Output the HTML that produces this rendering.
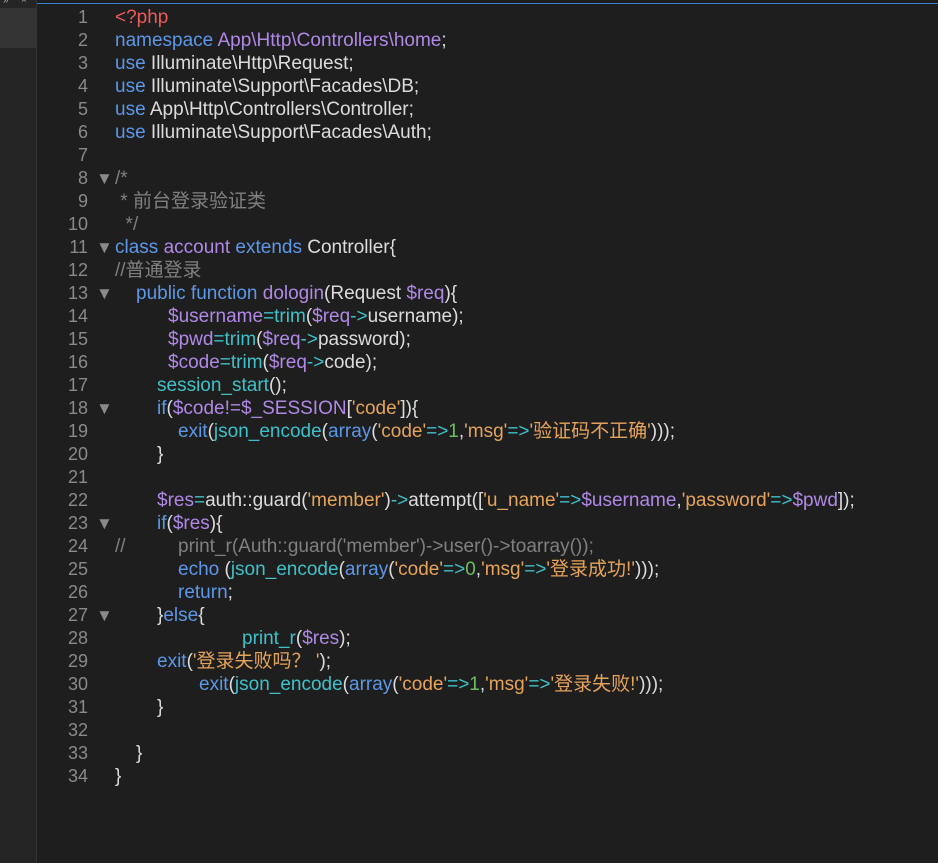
<!DOCTYPE html>
<html><head><meta charset="utf-8"><style>
body{margin:0;width:938px;height:863px;background:#1e1e1e;overflow:hidden;position:relative;font-family:"Liberation Sans","Noto Sans CJK SC",sans-serif;font-size:19px;color:#dcdcdc}
#side{position:absolute;left:0;top:0;width:36px;height:863px;background:#252526;border-right:1px solid #333}
#side .tab{position:absolute;left:0;top:8px;width:36px;height:40px;background:#333}
#topline{position:absolute;left:37px;top:3px;width:901px;height:1px;background:#3b7dd0}
.l{position:absolute;white-space:pre;height:23px;line-height:23px}
.n{position:absolute;width:60px;left:28px;text-align:right;color:#8a8a8a;line-height:23px;font-size:18px}
.f{position:absolute;left:96px;color:#8a8a8a;font-size:17px;line-height:23px}
.k{color:#5c98e8}.p{color:#b088e6}.t{color:#3ec1c9}.s{color:#e6a45a}.g{color:#6cbf60}.c{color:#808080}.r{color:#ec5a5a}
</style></head><body>
<div id="side"><div class="tab"></div><span style="position:absolute;left:3px;top:-5px;font-size:10px;color:#aaa">»</span><span style="position:absolute;left:21px;top:-5px;font-size:10px;color:#aaa">×</span></div>
<div id="topline"></div>
<div class="n" style="top:6px">1</div><div class="n" style="top:29px">2</div><div class="n" style="top:52px">3</div><div class="n" style="top:75px">4</div><div class="n" style="top:98px">5</div><div class="n" style="top:121px">6</div><div class="n" style="top:144px">7</div><div class="n" style="top:167px">8</div><div class="n" style="top:190px">9</div><div class="n" style="top:213px">10</div><div class="n" style="top:236px">11</div><div class="n" style="top:259px">12</div><div class="n" style="top:282px">13</div><div class="n" style="top:305px">14</div><div class="n" style="top:328px">15</div><div class="n" style="top:351px">16</div><div class="n" style="top:374px">17</div><div class="n" style="top:397px">18</div><div class="n" style="top:420px">19</div><div class="n" style="top:443px">20</div><div class="n" style="top:466px">21</div><div class="n" style="top:489px">22</div><div class="n" style="top:512px">23</div><div class="n" style="top:535px">24</div><div class="n" style="top:558px">25</div><div class="n" style="top:581px">26</div><div class="n" style="top:604px">27</div><div class="n" style="top:627px">28</div><div class="n" style="top:650px">29</div><div class="n" style="top:673px">30</div><div class="n" style="top:696px">31</div><div class="n" style="top:719px">32</div><div class="n" style="top:742px">33</div><div class="n" style="top:765px">34</div>
<div class="f" style="top:167px">▼</div><div class="f" style="top:236px">▼</div><div class="f" style="top:282px">▼</div><div class="f" style="top:397px">▼</div><div class="f" style="top:512px">▼</div><div class="f" style="top:604px">▼</div>
<div class="l" style="left:115px;top:6px"><span class="r">&lt;?php</span></div>
<div class="l" style="left:115px;top:29px"><span class="k">namespace</span> <span class="p">App\Http\Controllers\home</span>;</div>
<div class="l" style="left:115px;top:52px"><span class="k">use</span> Illuminate\Http\Request;</div>
<div class="l" style="left:115px;top:75px"><span class="k">use</span> Illuminate\Support\Facades\DB;</div>
<div class="l" style="left:115px;top:98px"><span class="k">use</span> App\Http\Controllers\Controller;</div>
<div class="l" style="left:115px;top:121px"><span class="k">use</span> Illuminate\Support\Facades\Auth;</div>
<div class="l c" style="left:115px;top:167px">/*</div>
<div class="l c" style="left:115px;top:190px"> * 前台登录验证类</div>
<div class="l c" style="left:115px;top:213px">  */</div>
<div class="l" style="left:115px;top:236px"><span class="k">class</span> <span class="p">account</span> <span class="k">extends</span> Controller{</div>
<div class="l c" style="left:115px;top:259px">//普通登录</div>
<div class="l" style="left:136px;top:282px"><span class="k">public function</span> <span class="p">dologin</span>(Request <span class="p">$req</span>){</div>
<div class="l" style="left:168px;top:305px"><span class="p">$username</span><span class="t">=trim</span>(<span class="p">$req</span><span class="t">-&gt;</span>username);</div>
<div class="l" style="left:168px;top:328px"><span class="p">$pwd</span><span class="t">=trim</span>(<span class="p">$req</span><span class="t">-&gt;</span>password);</div>
<div class="l" style="left:168px;top:351px"><span class="p">$code</span><span class="t">=trim</span>(<span class="p">$req</span><span class="t">-&gt;</span>code);</div>
<div class="l" style="left:157px;top:374px"><span class="t">session_start</span>();</div>
<div class="l" style="left:157px;top:397px"><span class="k">if</span>(<span class="p">$code!=$_SESSION</span>[<span class="s">'code'</span>]){</div>
<div class="l" style="left:178px;top:420px"><span class="k">exit</span>(<span class="t">json_encode</span>(<span class="k">array</span>(<span class="s">'code'</span><span class="t">=&gt;</span><span class="g">1</span>,<span class="s">'msg'</span><span class="t">=&gt;</span><span class="s">'验证码不正确'</span>)));</div>
<div class="l" style="left:157px;top:443px">}</div>
<div class="l" style="left:157px;top:489px"><span class="p">$res</span><span class="t">=</span>auth::guard(<span class="s">'member'</span>)<span class="t">-&gt;</span>attempt([<span class="s">'u_name'</span><span class="t">=&gt;</span><span class="p">$username</span>,<span class="s">'password'</span><span class="t">=&gt;</span><span class="p">$pwd</span>]);</div>
<div class="l" style="left:157px;top:512px"><span class="k">if</span>(<span class="p">$res</span>){</div>
<div class="l c" style="left:115px;top:535px">//</div>
<div class="l c" style="left:178px;top:535px">print_r(Auth::guard('member')-&gt;user()-&gt;toarray());</div>
<div class="l" style="left:178px;top:558px"><span class="k">echo</span> (<span class="t">json_encode</span>(<span class="k">array</span>(<span class="s">'code'</span><span class="t">=&gt;</span><span class="g">0</span>,<span class="s">'msg'</span><span class="t">=&gt;</span><span class="s">'登录成功!'</span>)));</div>
<div class="l" style="left:178px;top:581px"><span class="k">return</span>;</div>
<div class="l" style="left:157px;top:604px">}<span class="k">else</span>{</div>
<div class="l" style="left:242px;top:627px"><span class="t">print_r</span>(<span class="p">$res</span>);</div>
<div class="l" style="left:157px;top:650px"><span class="k">exit</span>(<span class="s">'登录失败吗？ '</span>);</div>
<div class="l" style="left:199px;top:673px"><span class="k">exit</span>(<span class="t">json_encode</span>(<span class="k">array</span>(<span class="s">'code'</span><span class="t">=&gt;</span><span class="g">1</span>,<span class="s">'msg'</span><span class="t">=&gt;</span><span class="s">'登录失败!'</span>)));</div>
<div class="l" style="left:157px;top:696px">}</div>
<div class="l" style="left:136px;top:742px">}</div>
<div class="l" style="left:115px;top:765px">}</div>
</body></html>
